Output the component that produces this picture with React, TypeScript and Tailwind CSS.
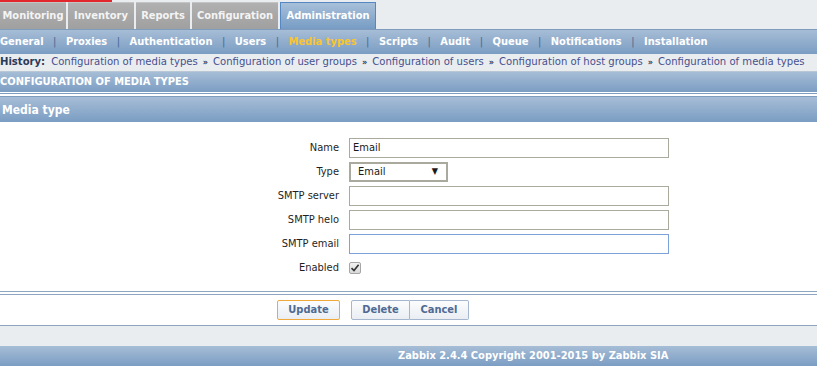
import React from 'react';

const TABS = [
  { label: 'Monitoring', w: 'w-[66px]' },
  { label: 'Inventory', w: 'w-[66px]' },
  { label: 'Reports', w: 'w-[54px]' },
  { label: 'Configuration', w: 'w-[86px]' },
];

const SUBNAV = ['General', 'Proxies', 'Authentication', 'Users', 'Media types', 'Scripts', 'Audit', 'Queue', 'Notifications', 'Installation'];

const HISTORY = [
  'Configuration of media types',
  'Configuration of user groups',
  'Configuration of users',
  'Configuration of host groups',
  'Configuration of media types',
];

const FONT = { fontFamily: '"DejaVu Sans Condensed", "DejaVu Sans", Verdana, sans-serif' };

function Field({ label, children }: { label: string; children: React.ReactNode }) {
  return (
    <>
      <div className="h-[24px] flex items-center justify-end text-[11px] text-[#1f1f1f]">{label}</div>
      <div className="h-[24px] flex items-center">{children}</div>
    </>
  );
}

function TextInput({ value = '', focused = false }: { value?: string; focused?: boolean }) {
  return (
    <div
      className={`h-[20px] w-[320px] flex items-center pl-[3px] text-[11px] text-[#1a1a1a] bg-white border ${
        focused ? 'border-[#7da2d8]' : 'border-[#aaa99e]'
      }`}
    >
      {value}
    </div>
  );
}

export default function App() {
  return (
    <div className="w-[817px] h-[366px] bg-white overflow-hidden flex flex-col" style={FONT}>
      {/* Top tabs */}
      <div className="bg-[#eaedf0] h-[30px] flex flex-col">
        <div className="h-[2px] w-[112px] bg-[#e3262b]" />
        <div className="flex gap-[2px] h-[27px] items-stretch">
          {TABS.map((t) => (
            <div
              key={t.label}
              className={`${t.w} flex items-center justify-center bg-gradient-to-b from-[#b0b0b0] to-[#a0a0a0] border-t border-[#c4c4c4] text-[11px] font-bold text-[#f4f4f4]`}
            >
              {t.label}
            </div>
          ))}
          <div className="w-[96px] flex items-center justify-center bg-gradient-to-b from-[#a8c0d9] to-[#779cc4] border border-[#5588c2] border-b-0 text-[11px] font-bold text-white">
            Administration
          </div>
        </div>
        <div className="h-[1px] bg-[#7f9bbd]" />
      </div>

      {/* Sub navigation */}
      <div className="h-[24px] flex items-center bg-gradient-to-b from-[#a6bdd6] to-[#7b9dc3] text-[11px] font-bold text-white">
        {SUBNAV.map((s, i) => (
          <React.Fragment key={s}>
            {i > 0 && <span className="mx-[9.5px] font-normal text-[#4a6790]">|</span>}
            <span className={s === 'Media types' ? 'text-[#f7c532]' : ''}>{s}</span>
          </React.Fragment>
        ))}
      </div>

      {/* History */}
      <div className="h-[18px] flex items-center bg-[#eaedf0] border-b border-[#b9c6d4] text-[11.2px] whitespace-nowrap">
        <span className="font-bold text-[#2b3a58] mr-[6px]">History:</span>
        {HISTORY.map((h, i) => (
          <React.Fragment key={i}>
            {i > 0 && <span className="mx-[5px] text-[#2b3a58] text-[9px] font-bold">»</span>}
            <span className="text-[#47508e]">{h}</span>
          </React.Fragment>
        ))}
      </div>

      {/* Page header */}
      <div className="h-[20px] flex items-center bg-gradient-to-b from-[#a6bdd6] to-[#7b9dc3] text-[11px] font-bold text-white">
        CONFIGURATION OF MEDIA TYPES
      </div>
      <div className="h-[1px] mt-[1px] bg-[#7f9bbd]" />

      {/* Form header */}
      <div className="mt-[2px] h-[26px] flex items-center pl-[2px] bg-gradient-to-b from-[#a6bdd6] to-[#7b9dc3] border-t border-[#7f9bbd] text-[12px] font-bold text-white">
        Media type
      </div>

      {/* Form */}
      <div className="pt-[14px] pb-[11px]">
        <div className="grid grid-cols-[339px_320px] gap-x-[10px]">
          <Field label="Name">
            <TextInput value="Email" />
          </Field>
          <Field label="Type">
            <div className="h-[20px] w-[99px] flex items-center justify-between pl-[7px] pr-[8px] text-[11px] text-[#1a1a1a] bg-white border-2 border-[#aaa99e]">
              <span>Email</span>
              <span className="text-[9px]">▼</span>
            </div>
          </Field>
          <Field label="SMTP server">
            <TextInput />
          </Field>
          <Field label="SMTP helo">
            <TextInput />
          </Field>
          <Field label="SMTP email">
            <TextInput focused />
          </Field>
          <Field label="Enabled">
            <div className="w-[12px] h-[12px] rounded-[2px] border border-[#a6a6a6] bg-gradient-to-b from-[#f2f2f2] to-[#d9d9d9] flex items-center justify-center">
              <svg width="10" height="10" viewBox="0 0 10 10">
                <path d="M1.5 5.2 L4 7.6 L8.6 1.8" fill="none" stroke="#333" strokeWidth="1.6" />
              </svg>
            </div>
          </Field>
        </div>
      </div>

      {/* Buttons */}
      <div className="h-[1px] bg-[#8ea5bf]" />
      <div className="h-[1px] mt-[2px] bg-[#8ea5bf]" />
      <div className="h-[30px] flex items-center gap-[11px] pl-[277px]">
        <div className="h-[20px] w-[63px] flex items-center justify-center rounded-[2px] border border-[#f2a93b] bg-gradient-to-b from-[#fbfcfd] to-[#eaeef3] text-[11px] font-bold text-[#4f6a92]">
          Update
        </div>
        <div className="flex">
          <div className="h-[20px] w-[59px] flex items-center justify-center rounded-l-[2px] border border-[#a4b7ce] bg-gradient-to-b from-[#fbfcfd] to-[#eaeef3] text-[11px] font-bold text-[#4f6a92]">
            Delete
          </div>
          <div className="h-[20px] w-[59px] flex items-center justify-center rounded-r-[2px] border border-l-0 border-[#a4b7ce] bg-gradient-to-b from-[#fbfcfd] to-[#eaeef3] text-[11px] font-bold text-[#4f6a92]">
            Cancel
          </div>
        </div>
      </div>
      <div className="h-[1px] bg-[#8ea5bf]" />
      <div className="h-[20px] bg-[#eaedf0]" />

      {/* Footer */}
      <div className="h-[20px] flex items-center pl-[398px] bg-gradient-to-b from-[#a6bdd6] to-[#7b9dc3] text-[11px] font-bold text-white">
        Zabbix 2.4.4 Copyright 2001-2015 by Zabbix SIA
      </div>
    </div>
  );
}
